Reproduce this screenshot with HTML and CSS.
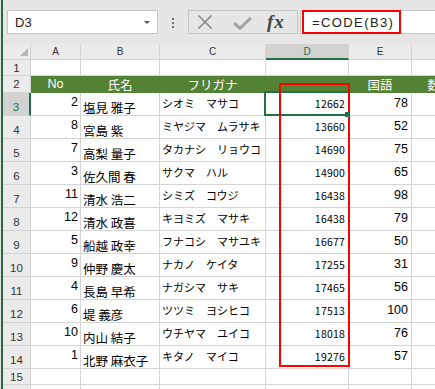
FILE: index.html
```html
<!DOCTYPE html>
<html lang="ja">
<head>
    <meta charset="UTF-8">
    <meta name="viewport" content="width=device-width, initial-scale=1.0">
    <title>CODE関数</title>
    <link rel="stylesheet" href="styles.css">
</head>
<body>
    <div class="app">
        <div class="formula-bar">
            <div class="name-box">
                <span class="name-text">D3</span>
                <span class="name-arrow"></span>
            </div>
            <div class="grip"><i></i><i></i><i></i></div>
            <div class="fx-buttons">
                <svg class="btn-cancel" width="16" height="16" viewBox="0 0 16 16">
                    <path d="M1.5 1.5 L14.5 14.5 M14.5 1.5 L1.5 14.5" stroke="#8c8c8c" stroke-width="1.7" fill="none"/>
                </svg>
                <svg class="btn-enter" width="19" height="13" viewBox="0 0 19 13">
                    <path d="M1.2 6.2 L7 11.3 L17.8 1" stroke="#a3a3a3" stroke-width="3" fill="none"/>
                </svg>
                <span class="btn-fx">fx</span>
            </div>
            <div class="formula-input">
                <span class="formula-text">=CODE(B3)</span>
                <span class="callout"></span>
            </div>
        </div>

        <div class="sheet">
            <!-- column headers -->
            <div class="corner"><span class="corner-tri"></span></div>
            <div class="col-head">A</div>
            <div class="col-head">B</div>
            <div class="col-head">C</div>
            <div class="col-head active">D</div>
            <div class="col-head">E</div>
            <div class="col-head"></div>

            <div class="row-head">1</div>
            <div class="cell"></div><div class="cell"></div><div class="cell"></div><div class="cell"></div><div class="cell"></div><div class="cell"></div>

            <div class="row-head">2</div>
            <div class="cell title">No</div>
            <div class="cell title jp">氏名</div>
            <div class="cell title jp">フリガナ</div>
            <div class="cell title"></div>
            <div class="cell title jp">国語</div>
            <div class="cell title jp">数学</div>

            <div class="row-head tall active">3</div>
            <div class="cell no">2</div><div class="cell name">塩見 雅子</div><div class="cell kana">シオミ　マサコ</div><div class="cell code">12662</div><div class="cell score">78</div><div class="cell"></div>

            <div class="row-head tall">4</div>
            <div class="cell no">8</div><div class="cell name">宮島 紫</div><div class="cell kana">ミヤジマ　ムラサキ</div><div class="cell code">13660</div><div class="cell score">52</div><div class="cell"></div>

            <div class="row-head tall">5</div>
            <div class="cell no">7</div><div class="cell name">高梨 量子</div><div class="cell kana">タカナシ　リョウコ</div><div class="cell code">14690</div><div class="cell score">75</div><div class="cell"></div>

            <div class="row-head tall">6</div>
            <div class="cell no">3</div><div class="cell name">佐久間 春</div><div class="cell kana">サクマ　ハル</div><div class="cell code">14900</div><div class="cell score">65</div><div class="cell"></div>

            <div class="row-head tall">7</div>
            <div class="cell no">11</div><div class="cell name">清水 浩二</div><div class="cell kana">シミズ　コウジ</div><div class="cell code">16438</div><div class="cell score">98</div><div class="cell"></div>

            <div class="row-head tall">8</div>
            <div class="cell no">12</div><div class="cell name">清水 政喜</div><div class="cell kana">キヨミズ　マサキ</div><div class="cell code">16438</div><div class="cell score">79</div><div class="cell"></div>

            <div class="row-head tall">9</div>
            <div class="cell no">5</div><div class="cell name">船越 政幸</div><div class="cell kana">フナコシ　マサユキ</div><div class="cell code">16677</div><div class="cell score">50</div><div class="cell"></div>

            <div class="row-head tall">10</div>
            <div class="cell no">9</div><div class="cell name">仲野 慶太</div><div class="cell kana">ナカノ　ケイタ</div><div class="cell code">17255</div><div class="cell score">31</div><div class="cell"></div>

            <div class="row-head tall">11</div>
            <div class="cell no">4</div><div class="cell name">長島 早希</div><div class="cell kana">ナガシマ　サキ</div><div class="cell code">17465</div><div class="cell score">56</div><div class="cell"></div>

            <div class="row-head tall">12</div>
            <div class="cell no">6</div><div class="cell name">堤 義彦</div><div class="cell kana">ツツミ　ヨシヒコ</div><div class="cell code">17513</div><div class="cell score">100</div><div class="cell"></div>

            <div class="row-head tall">13</div>
            <div class="cell no">10</div><div class="cell name">内山 結子</div><div class="cell kana">ウチヤマ　ユイコ</div><div class="cell code">18018</div><div class="cell score">76</div><div class="cell"></div>

            <div class="row-head tall">14</div>
            <div class="cell no">1</div><div class="cell name">北野 麻衣子</div><div class="cell kana">キタノ　マイコ</div><div class="cell code">19276</div><div class="cell score">57</div><div class="cell"></div>

            <div class="row-head">15</div>
            <div class="cell"></div><div class="cell"></div><div class="cell"></div><div class="cell"></div><div class="cell"></div><div class="cell"></div>

            <div class="row-head"></div>
            <div class="cell"></div><div class="cell"></div><div class="cell"></div><div class="cell"></div><div class="cell"></div><div class="cell"></div>

            <!-- overlays -->
            <div class="selection"></div>
            <div class="highlight"></div>
            <div class="fill-handle"></div>
        </div>
    </div>
</body>
</html>
```

FILE: styles.css
```css
body {
    margin: 0;
    overflow: hidden;
    background-color: #e6e6e6;
}

.app {
    width: max-content;
    margin-left: 1px;
    border-left: 2px solid #2a6642;
}

/* formula bar */

.formula-bar {
    display: flex;
    align-items: flex-start;
    box-sizing: border-box;
    height: 44px;
    padding: 10px 0 0 4px;
    background-color: #e6e6e6;
}

.name-box {
    display: flex;
    align-items: center;
    box-sizing: border-box;
    width: 151px;
    height: 24px;
    padding-left: 7px;
    border: 1px solid #c6c6c6;
    background-color: #fff;
}

.name-text {
    flex: 1;
    font: 13px "Liberation Sans", Arial, sans-serif;
    color: #222;
}

.name-arrow {
    width: 0;
    height: 0;
    margin-right: 7px;
    border-left: 3px solid transparent;
    border-right: 3px solid transparent;
    border-top: 3px solid #555;
}

.grip {
    display: flex;
    flex-direction: column;
    gap: 2px;
    margin: 8px 0 0 14px;
}

.grip i {
    display: block;
    width: 2px;
    height: 2px;
    background-color: #707070;
}

.fx-buttons {
    display: flex;
    align-items: center;
    box-sizing: border-box;
    width: 110px;
    height: 24px;
    margin-left: 14px;
    padding-left: 8px;
    border: 1px solid #c6c6c6;
}

.btn-enter {
    margin: 3px 0 0 20px;
}

.btn-fx {
    margin-left: 15px;
    font: italic bold 19px "Liberation Serif", "Times New Roman", serif;
    color: #444;
    letter-spacing: 1px;
}

.formula-input {
    position: relative;
    display: flex;
    align-items: center;
    flex: 1;
    box-sizing: border-box;
    height: 24px;
    margin-left: 2px;
    padding-left: 11px;
    border: 1px solid #c6c6c6;
    background-color: #fff;
}

.formula-text {
    font: 13px "Liberation Sans", Arial, sans-serif;
    letter-spacing: 1.4px;
    color: #222;
}

.callout {
    position: absolute;
    left: 1px;
    top: -1px;
    box-sizing: border-box;
    width: 99px;
    height: 24px;
    border: 2px solid #ff0000;
}

/* sheet grid */

.sheet {
    position: relative;
    display: grid;
    grid-template-columns: 28px 50px 79px 106px 83px 63px 57px;
    grid-template-rows: 16px 16px 17px repeat(12, 23px) 16px 16px;
    background-color: #fff;
}

.corner,
.col-head,
.row-head,
.cell {
    display: flex;
    align-items: center;
    box-sizing: border-box;
    overflow: hidden;
    white-space: nowrap;
    line-height: 1;
    border-right: 1px solid #d4d4d4;
    border-bottom: 1px solid #d4d4d4;
}

.corner {
    justify-content: flex-end;
    align-items: flex-end;
    padding: 0 2px 3px 0;
    background-color: #ebebeb;
}

.corner-tri {
    width: 0;
    height: 0;
    border-left: 8px solid transparent;
    border-bottom: 8px solid #b9b9b9;
}

.col-head {
    justify-content: center;
    background-color: #ebebeb;
    font: 10px "Liberation Sans", Arial, sans-serif;
    color: #333;
}

.row-head {
    justify-content: center;
    background-color: #ebebeb;
    font: 11.5px "Liberation Sans", Arial, sans-serif;
    color: #333;
}

.row-head.tall {
    padding-top: 6px;
}

.col-head.active {
    background-color: #d2d2d2;
    color: #217346;
    border-bottom: 2px solid #217346;
}

.row-head.active {
    background-color: #d2d2d2;
    color: #217346;
    border-right: 2px solid #217346;
}

.title {
    justify-content: center;
    background-color: #548235;
    border-color: #548235;
    color: #fff;
    font: 12.5px "Liberation Sans", Arial, sans-serif;
}

.title.jp {
    font: 12.5px "Noto Sans CJK JP", sans-serif;
}

.no,
.score {
    justify-content: flex-end;
    padding: 0 2px 4px 0;
    font: 12.5px "Liberation Sans", Arial, sans-serif;
    color: #000;
}

.score {
    padding: 0 3px 2px 0;
}

.name {
    padding: 7px 0 0 2px;
    font: 12.5px "Noto Sans CJK JP", sans-serif;
    color: #000;
}

.kana {
    padding: 0 0 2px 2px;
    font: 11px "Noto Sans CJK JP", sans-serif;
    color: #000;
}

.code {
    justify-content: flex-end;
    padding: 0 3px 2px 0;
    font: 10.5px "Noto Sans CJK JP", sans-serif;
    letter-spacing: 0.2px;
    color: #000;
}

/* overlays */

.selection {
    position: absolute;
    left: 261px;
    top: 47px;
    box-sizing: border-box;
    width: 86px;
    height: 25px;
    border: 2px solid #217346;
}

.highlight {
    position: absolute;
    left: 276px;
    top: 39px;
    box-sizing: border-box;
    width: 71px;
    height: 284px;
    border: 2px solid #ff0000;
}

.fill-handle {
    position: absolute;
    left: 342px;
    top: 68px;
    width: 5px;
    height: 5px;
    background-color: #217346;
}
```
